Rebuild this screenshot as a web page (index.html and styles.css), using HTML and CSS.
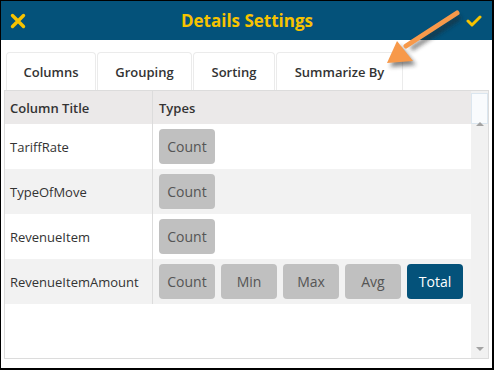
FILE: index.html
```html
<!DOCTYPE html>
<html>

<head>
    <title>Details Settings</title>
    <link rel="stylesheet" href="styles.css">
</head>

<body>

    <div id="dialog">
        <div id="header">
            <span class="header-btn">
                <svg width="16" height="16" viewBox="0 0 16 16">
                    <path d="M2.5 2.5 L13.5 13.5 M13.5 2.5 L2.5 13.5" stroke="#f7c300" stroke-width="3.4" stroke-linecap="round" />
                </svg>
            </span>
            <span id="title">Details Settings</span>
            <span class="header-btn">
                <svg width="16" height="12" viewBox="0 0 16 12">
                    <path d="M2 6 L6 10 L14 2" stroke="#f7c300" stroke-width="3" fill="none" stroke-linecap="round" stroke-linejoin="round" />
                </svg>
            </span>
        </div>

        <div id="tabs">
            <div class="tab tab-columns">Columns</div>
            <div class="tab tab-grouping">Grouping</div>
            <div class="tab tab-sorting">Sorting</div>
            <div class="tab tab-summary active">Summarize By</div>
        </div>

        <div id="grid">
            <div id="grid-body">
                <div class="row head">
                    <div class="cell name">Column Title</div>
                    <div class="cell types">Types</div>
                </div>
                <div class="row">
                    <div class="cell name">TariffRate</div>
                    <div class="cell types"><button class="type-btn">Count</button></div>
                </div>
                <div class="row alt">
                    <div class="cell name">TypeOfMove</div>
                    <div class="cell types"><button class="type-btn">Count</button></div>
                </div>
                <div class="row">
                    <div class="cell name">RevenueItem</div>
                    <div class="cell types"><button class="type-btn">Count</button></div>
                </div>
                <div class="row alt">
                    <div class="cell name">RevenueItemAmount</div>
                    <div class="cell types">
                        <button class="type-btn">Count</button>
                        <button class="type-btn">Min</button>
                        <button class="type-btn">Max</button>
                        <button class="type-btn">Avg</button>
                        <button class="type-btn selected">Total</button>
                    </div>
                </div>
            </div>
            <div id="scrollbar">
                <div class="scroll-head"></div>
                <div class="scroll-track">
                    <span class="arrow up"></span>
                    <span class="arrow down"></span>
                </div>
            </div>
        </div>

        <svg id="pointer" width="100" height="80" viewBox="0 0 100 80">
            <defs>
                <filter id="shade" x="-20%" y="-20%" width="140%" height="140%">
                    <feGaussianBlur stdDeviation="2" />
                </filter>
            </defs>
            <g transform="translate(3,4)" opacity="0.55" filter="url(#shade)">
                <path d="M77 13 L28 45" stroke="#222" stroke-width="5" />
                <path d="M7 63 L17 41 L33 61 Z" fill="#222" />
            </g>
            <path d="M77 13 L26 46" stroke="#f7994a" stroke-width="5" stroke-linecap="round" />
            <path d="M7 63 L17 41 L33 61 Z" fill="#f7994a" />
        </svg>
    </div>

</body>

</html>
```

FILE: styles.css
```css
body {
    margin: 0;
    font-family: "Open Sans", "Noto Sans", Arial, sans-serif;
    font-size: 13px;
    color: #333;
    background-color: white;
}

#dialog {
    position: relative;
    box-sizing: border-box;
    width: 494px;
    height: 370px;
    border-style: solid;
    border-color: black;
    border-width: 1px 2px 2px 1px;
    display: flex;
    flex-direction: column;
    background-color: white;
}

#header {
    height: 39px;
    display: flex;
    align-items: center;
    justify-content: space-between;
    padding: 0 10px 0 9px;
    background-color: #04527a;
}

.header-btn {
    display: flex;
    width: 16px;
    justify-content: center;
}

#title {
    color: #f7c300;
    font-size: 17px;
    font-weight: bold;
    margin-left: 2px;
}

#tabs {
    display: flex;
    gap: 1px;
    margin-top: 12px;
    padding-left: 5px;
}

.tab {
    box-sizing: border-box;
    height: 38px;
    display: flex;
    align-items: center;
    justify-content: center;
    border: 1px solid #ebebeb;
    border-bottom: none;
    border-radius: 4px 4px 0 0;
    font-weight: 600;
    color: #333;
}

.tab-columns {
    width: 90px;
}

.tab-grouping {
    width: 95px;
}

.tab-sorting {
    width: 82px;
}

.tab-summary {
    width: 127px;
}

#grid {
    display: flex;
    margin: 0 3px 0 3px;
    height: 269px;
    box-sizing: border-box;
    border: 1px solid #dcdcdc;
}

#grid-body {
    flex: 1;
}

.row {
    display: flex;
    height: 45px;
    background-color: white;
}

.row.alt {
    background-color: #f2f2f2;
}

.row.head {
    height: 33px;
    background-color: #ebe9e9;
    font-weight: 600;
}

.cell {
    display: flex;
    align-items: center;
    box-sizing: border-box;
}

.cell.name {
    width: 148px;
    padding-left: 5px;
    border-right: 1px solid #dcdcdc;
}

.cell.types {
    flex: 1;
    padding-left: 6px;
    gap: 6px;
}

.type-btn {
    width: 56px;
    height: 35px;
    border: none;
    border-radius: 4px;
    background-color: #c0c0c0;
    color: #555;
    font-family: inherit;
    font-size: 14px;
    padding: 0;
}

.type-btn.selected {
    background-color: #04527a;
    color: white;
}

#scrollbar {
    width: 17px;
    display: flex;
    flex-direction: column;
    background-color: #f1f1f1;
}

.scroll-head {
    height: 31px;
    margin-top: 2px;
    box-sizing: border-box;
    border: 1px solid #dbe6ef;
    background-color: #f9fbfd;
}

.scroll-track {
    flex: 1;
    display: flex;
    flex-direction: column;
    justify-content: space-between;
    align-items: center;
    padding: 0 0 7px 0;
}

.arrow {
    width: 0;
    height: 0;
    border-left: 4px solid transparent;
    border-right: 4px solid transparent;
}

.arrow.up {
    margin-top: -2px;
    border-bottom: 4px solid #a3a3a3;
}

.arrow.down {
    border-top: 4px solid #a3a3a3;
}

#pointer {
    position: absolute;
    left: 379px;
    top: -1px;
}
```
